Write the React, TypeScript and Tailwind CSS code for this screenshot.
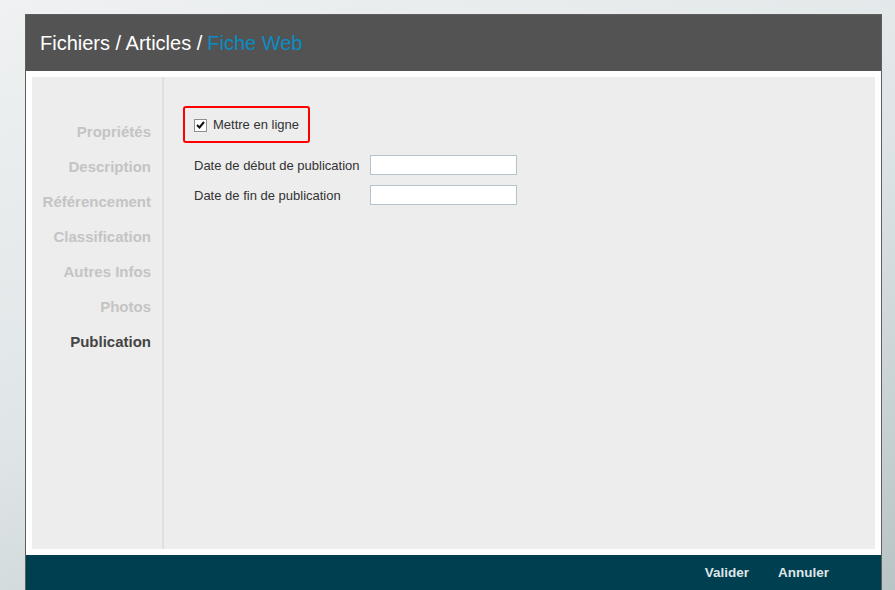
import React from "react";

const items = ["Propriétés", "Description", "Référencement", "Classification", "Autres Infos", "Photos", "Publication"];

export default function App() {
  return (
    <div
      className="w-[895px] h-[590px] overflow-hidden bg-[linear-gradient(160deg,#eff1f2_0%,#dfe5e7_50%,#b9c4c6_100%)] pt-[14px] pl-[25px]"
      style={{ fontFamily: '"Liberation Sans", Arial, sans-serif' }}
    >
      <div className="w-[857px] h-[576px] flex flex-col border-x border-t border-[#5e5e5e] bg-white">
        <div className="h-[56px] shrink-0 bg-[#535353] flex items-center pl-[14px] text-[20px] text-white">
          <span>Fichiers / Articles / </span>
          <span className="text-[#0a8cc4] ml-[5px]">Fiche Web</span>
        </div>
        <div className="flex-1 flex flex-col px-[6px] pt-[6px] pb-[6px] min-h-0">
          <div className="flex-1 bg-[#ededed] flex min-h-0">
            <div className="w-[132px] shrink-0 border-r-2 border-[#dfdfdf] flex flex-col items-end pr-[11px] pt-[45px] gap-[15.5px]">
              {items.map((it, i) => (
                <div
                  key={it}
                  className={`text-[15px] font-bold leading-[19.5px] ${i === items.length - 1 ? "text-[#444444]" : "text-[#c4c4c4]"}`}
                >
                  {it}
                </div>
              ))}
            </div>
            <div className="flex-1 pl-[19px] pt-[29px]">
              <div className="w-[127px] h-[37px] border-2 border-[#ff0000] rounded-[3px] flex items-center pl-[9px] pt-[1px]">
                <div className="w-[13px] h-[13px] border border-[#8f8f8f] bg-white flex items-center justify-center">
                  <svg width="9" height="8" viewBox="0 0 9 8">
                    <path d="M1 4 L3.5 6.5 L8 1" stroke="#111" strokeWidth="2" fill="none" />
                  </svg>
                </div>
                <span className="ml-[6px] text-[13px] text-[#333333]">Mettre en ligne</span>
              </div>
              <div className="mt-[12px] flex flex-col gap-[10px] pl-[11px]">
                <div className="flex items-center h-[20px]">
                  <span className="w-[176px] text-[13px] leading-[16px] text-[#333333] pt-[2px]">Date de début de publication</span>
                  <div className="w-[147px] h-[20px] border border-[#b5c3cd] bg-white" />
                </div>
                <div className="flex items-center h-[20px]">
                  <span className="w-[176px] text-[13px] leading-[16px] text-[#333333] pt-[2px]">Date de fin de publication</span>
                  <div className="w-[147px] h-[20px] border border-[#b5c3cd] bg-white" />
                </div>
              </div>
            </div>
          </div>
        </div>
        <div className="h-[35px] shrink-0 bg-[#003f4f] flex items-center justify-end pr-[52px] gap-[29px] text-[13.5px] font-bold text-[#dfe6e8] pt-[1px]">
          <span>Valider</span>
          <span>Annuler</span>
        </div>
      </div>
    </div>
  );
}
